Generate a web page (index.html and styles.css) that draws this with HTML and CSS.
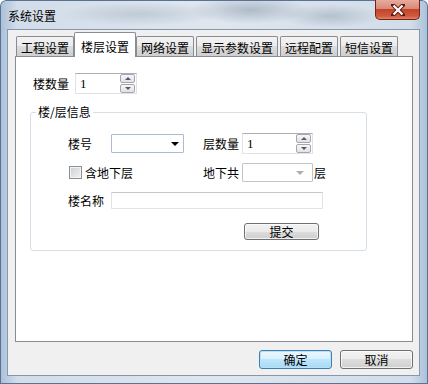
FILE: index.html
```html
<!DOCTYPE html>
<html lang="zh-CN">
<head>
    <meta charset="UTF-8">
    <title>系统设置</title>
    <link rel="stylesheet" href="styles.css">
</head>
<body>
    <div class="window">
        <!-- 标题栏 -->
        <div class="titlebar">
            <span class="title">系统设置</span>
            <button class="close-btn">
                <svg width="14" height="12" viewBox="0 0 14 12">
                    <path d="M2 1 L12 11 M12 1 L2 11" stroke="#5a1a10" stroke-width="4" stroke-linecap="square"/>
                    <path d="M2.5 1.5 L11.5 10.5 M11.5 1.5 L2.5 10.5" stroke="#fff" stroke-width="2.2"/>
                </svg>
            </button>
        </div>

        <div class="client">
            <div class="tab-strip">
                <div class="tab">工程设置</div>
                <div class="tab active">楼层设置</div>
                <div class="tab">网络设置</div>
                <div class="tab">显示参数设置</div>
                <div class="tab">远程配置</div>
                <div class="tab">短信设置</div>
            </div>

            <div class="tab-panel">
                <div class="field-row count-row">
                    <span class="count-label">楼数量</span>
                    <div class="spinner count-spinner">
                        <span class="spin-value">1</span>
                        <div class="spin-buttons">
                            <span class="spin-btn"><i class="arrow-up"></i></span>
                            <span class="spin-btn"><i class="arrow-down"></i></span>
                        </div>
                    </div>
                </div>

                <fieldset class="group">
                    <legend>楼/层信息</legend>

                    <div class="group-row row-building">
                        <span class="label">楼号</span>
                        <div class="combo"><i class="combo-arrow"></i></div>
                        <span class="label-right">层数量</span>
                        <div class="spinner floor-spinner">
                            <span class="spin-value">1</span>
                            <div class="spin-buttons">
                                <span class="spin-btn"><i class="arrow-up"></i></span>
                                <span class="spin-btn"><i class="arrow-down"></i></span>
                            </div>
                        </div>
                    </div>

                    <div class="group-row row-basement">
                        <label class="check-label"><span class="checkbox"></span>含地下层</label>
                        <span class="label-right">地下共</span>
                        <div class="combo combo-disabled"><i class="combo-arrow"></i></div>
                        <span class="unit">层</span>
                    </div>

                    <div class="group-row row-name">
                        <span class="label">楼名称</span>
                        <div class="text-input"></div>
                    </div>

                    <div class="group-row row-submit">
                        <button class="btn submit-btn">提交</button>
                    </div>
                </fieldset>
            </div>

            <div class="dialog-buttons">
                <button class="btn btn-default">确定</button>
                <button class="btn">取消</button>
            </div>
        </div>
    </div>
</body>
</html>
```

FILE: styles.css
```css
* {
    box-sizing: border-box;
}

body {
    margin: 0;
    background: #fff;
    font-family: "Noto Sans CJK SC", "Noto Sans", sans-serif;
    font-size: 12px;
    color: #000;
}

/* 窗口外框 */
.window {
    width: 428px;
    height: 384px;
    padding: 0 8px 8px 7px;
    border-radius: 6px 6px 0 0;
    background:
        radial-gradient(ellipse 60px 14px at 250px 10px, rgba(90, 110, 135, 0.35), transparent),
        radial-gradient(ellipse 80px 12px at 140px 14px, rgba(110, 130, 150, 0.25), transparent),
        radial-gradient(ellipse 50px 12px at 330px 16px, rgba(100, 120, 140, 0.3), transparent),
        linear-gradient(to right, #a9bfd8, #d2dde9 4%, #dfe6ee 50%, #d2dde9 96%, #a9bfd8);
    box-shadow: inset 0 0 0 1px #5b7392;
}

.titlebar {
    height: 29px;
    display: flex;
    justify-content: space-between;
    align-items: flex-start;
}

.title {
    margin: 8px 0 0 1px;
    line-height: 16px;
}

.close-btn {
    width: 45px;
    height: 20px;
    padding: 0;
    border: 1px solid #6e2417;
    border-top: none;
    border-radius: 0 0 5px 5px;
    background: linear-gradient(#e8ab9d, #d88a78 45%, #c4432a 50%, #cf5a3c 85%, #e2866a);
    display: flex;
    align-items: center;
    justify-content: center;
}

/* 客户区 */
.client {
    height: 347px;
    background: #f0f0f0;
    border: 1px solid #8597ad;
    padding: 2px 6px 0 7px;
}

.tab-strip {
    display: flex;
    align-items: flex-end;
    gap: 2px;
    height: 24px;
    padding-left: 1px;
    position: relative;
    z-index: 1;
}

.tab {
    height: 20px;
    padding: 2px 4px 0;
    border: 1px solid #898c95;
    border-bottom: none;
    border-radius: 2px 2px 0 0;
    background: linear-gradient(#f3f3f3, #ebebeb 50%, #dddddd 50%, #cfcfcf);
    line-height: 17px;
    white-space: nowrap;
}

.tab.active {
    height: 25px;
    margin: 0 -2px -1px;
    padding: 5px 6px 0;
    background: #fff;
    position: relative;
}

.tab-panel {
    height: 286px;
    background: #fff;
    border: 1px solid #898c95;
    padding: 16px 0 0 14px;
}

.field-row {
    display: flex;
    align-items: center;
}

.count-row {
    height: 21px;
    padding-left: 3px;
}

.count-label {
    width: 42px;
}

/* 微调框 */
.spinner {
    height: 21px;
    display: flex;
    align-items: center;
    justify-content: space-between;
    background: #fff;
    border: 1px solid #dfe3e9;
    border-top-color: #abadb3;
    padding: 0 1px 0 4px;
}

.count-spinner {
    width: 62px;
}

.floor-spinner {
    width: 71px;
}

.spin-value {
    font-family: "Liberation Serif", serif;
    font-size: 13px;
    line-height: 15px;
}

.spin-buttons {
    display: flex;
    flex-direction: column;
    gap: 1px;
}

.spin-btn {
    width: 15px;
    height: 9px;
    border: 1px solid #a7a7a7;
    border-radius: 2px;
    background: linear-gradient(#f7f7f7, #e2e2e2);
    display: flex;
    align-items: center;
    justify-content: center;
}

.arrow-up {
    border-left: 3px solid transparent;
    border-right: 3px solid transparent;
    border-bottom: 3px solid #4b5c7e;
}

.arrow-down {
    border-left: 3px solid transparent;
    border-right: 3px solid transparent;
    border-top: 3px solid #4b5c7e;
}

/* 分组框 */
.group {
    width: 337px;
    height: 146px;
    margin: 11px 0 0;
    padding: 0;
    border: 1px solid #d5dfe5;
    border-radius: 3px;
}

.group legend {
    margin-left: 5px;
    padding: 0 2px;
    line-height: 14px;
}

.group-row {
    display: flex;
    align-items: center;
    padding-left: 37px;
}

.row-building {
    margin-top: 14px;
    height: 21px;
}

.row-basement {
    margin-top: 9px;
    height: 19px;
}

.row-name {
    margin-top: 10px;
    height: 17px;
}

.row-submit {
    margin-top: 14px;
    height: 17px;
}

.label {
    width: 43px;
}

.label-right {
    width: 39px;
}

.combo + .label-right {
    margin-left: 19px;
}

.combo {
    width: 73px;
    height: 19px;
    border: 1px solid #a9bcd4;
    border-radius: 1px;
    background: #fff;
    display: flex;
    justify-content: flex-end;
    align-items: center;
    padding-right: 4px;
}

.combo-arrow {
    border-left: 4px solid transparent;
    border-right: 4px solid transparent;
    border-top: 4px solid #000;
}

.combo-disabled {
    width: 71px;
    border-color: #c2c5c8;
    padding-right: 8px;
}

.combo-disabled .combo-arrow {
    border-left-width: 4px;
    border-right-width: 4px;
    border-top: 4px solid #b0b0b0;
}

.unit {
    margin-left: 1px;
}

.check-label {
    width: 135px;
    display: flex;
    align-items: center;
    gap: 3px;
}

.checkbox {
    width: 13px;
    height: 13px;
    margin-left: 1px;
    border: 1px solid #8e8f8f;
    background: linear-gradient(135deg, #cbcfd5, #f4f4f4);
    box-shadow: inset 0 0 0 1px #f4f4f4;
}

.text-input {
    width: 212px;
    height: 17px;
    background: #fff;
    border: 1px solid #e2e3ea;
    border-top-color: #c4c7cc;
}

/* 按钮 */
.btn {
    width: 73px;
    height: 19px;
    padding: 0;
    border: 1px solid #707070;
    border-radius: 3px;
    background: linear-gradient(#f2f2f2, #ebebeb 50%, #dddddd 50%, #cfcfcf);
    box-shadow: inset 0 0 0 1px rgba(255, 255, 255, 0.7);
    font-family: inherit;
    font-size: 12px;
    line-height: 15px;
    color: #000;
}

.submit-btn {
    width: 75px;
    height: 17px;
    margin-left: 176px;
    line-height: 13px;
}

.dialog-buttons {
    display: flex;
    justify-content: flex-end;
    gap: 8px;
    margin-top: 8px;
}

.btn-default {
    border-color: #3c7fb1;
    background: linear-gradient(#eaf6fd, #d9f0fc 50%, #bee6fd 50%, #a7d9f5);
    box-shadow: inset 0 0 0 1px #b9e0f6;
}
```
